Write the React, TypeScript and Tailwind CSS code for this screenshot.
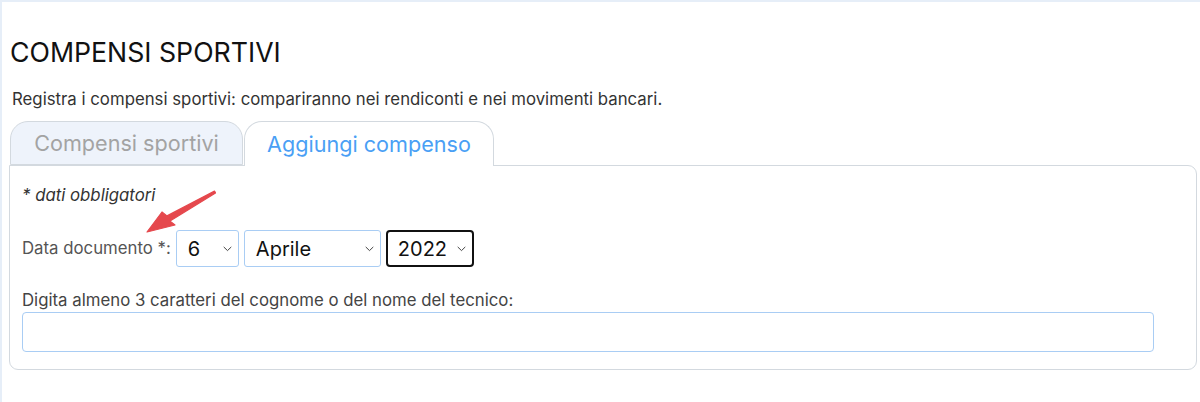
import React from "react";

function Chevron() {
  return (
    <svg width="9" height="6" viewBox="0 0 9 6" className="absolute right-[6px] top-1/2 -translate-y-1/2" fill="none">
      <path d="M1 1.2 L4.5 4.6 L8 1.2" stroke="#444" strokeWidth="1" strokeLinecap="round" strokeLinejoin="round" />
    </svg>
  );
}

function FakeSelect({ value, w, focused }: { value: string; w: string; focused?: boolean }) {
  return (
    <div
      className={
        "relative h-[37px] flex items-center text-[20px] text-[#111] bg-white " +
        w +
        (focused ? " border-2 border-[#111] rounded-[4px] pl-[10px]" : " border border-[#a9cdf4] rounded-[3px] pl-[11px]")
      }
    >
      {value}
      <Chevron />
    </div>
  );
}

export default function App() {
  return (
    <div className="w-[1200px] h-[402px] bg-white overflow-hidden" style={{ fontFamily: 'Inter, "Liberation Sans", Arial, sans-serif' }}>
      <div className="h-full border-t-2 border-l-2 border-[#e6eef8] pt-[35px] pl-[7px] pr-[2px]">
        <h1 className="text-[26.7px] leading-[30px] text-[#111] pl-[1px]">COMPENSI SPORTIVI</h1>
        <p className="mt-[22px] text-[16.8px] leading-[20px] text-[#333] pl-[3px]">
          Registra i compensi sportivi: compariranno nei rendiconti e nei movimenti bancari.
        </p>
        <div className="mt-[12px] flex items-end pl-[1px]">
          <div className="w-[233px] h-[44px] bg-[#eef3fb] border border-[#d3d9df] rounded-t-[18px] flex items-center justify-center text-[21.6px] text-[#a3a3a3]">
            Compensi sportivi
          </div>
          <div className="ml-[1px] w-[250px] h-[45px] -mb-px bg-white border border-b-0 border-[#d3d9df] rounded-t-[18px] flex items-center justify-center text-[21.6px] text-[#4a9ff5] relative z-10">
            Aggiungi compenso
          </div>
        </div>
        <div className="w-[1188px] border border-[#d3d9df] rounded-b-[9px] rounded-tr-[9px] px-[12px] pt-[19px] pb-[17px] relative">
          <p className="italic text-[16.8px] leading-[20px] text-[#333]">* dati obbligatori</p>
          <div className="mt-[25px] flex items-center gap-[5px]">
            <span className="text-[16.8px] text-[#555]">Data documento *:</span>
            <FakeSelect value="6" w="w-[63px]" />
            <FakeSelect value="Aprile" w="w-[137px]" />
            <FakeSelect value="2022" w="w-[88px]" focused />
          </div>
          <p className="mt-[23px] text-[16.8px] leading-[20px] text-[#444]">
            Digita almeno 3 caratteri del cognome o del nome del tecnico:
          </p>
          <div className="mt-[2px] w-[1132px] h-[40px] border border-[#a9cdf4] rounded-[4px]" />
          <svg className="absolute left-0 top-0" width="230" height="80" viewBox="0 0 230 80">
            <path
              d="M137 66 L152 46 L157 49.9 L204.5 25.1 L205.5 26.9 L160 55.1 L165 59 Z"
              fill="#e5484d"
              stroke="#e5484d"
              strokeWidth="1.2"
              strokeLinejoin="round"
            />
          </svg>
        </div>
      </div>
    </div>
  );
}
